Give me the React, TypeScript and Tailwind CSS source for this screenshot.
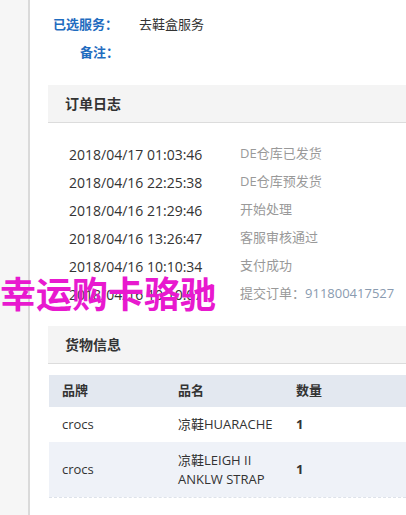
import React from "react";

const font = { fontFamily: '"Open Sans", "Noto Sans CJK SC", sans-serif' };

const logs = [
  ["2018/04/17 01:03:46", "DE仓库已发货"],
  ["2018/04/16 22:25:38", "DE仓库预发货"],
  ["2018/04/16 21:29:46", "开始处理"],
  ["2018/04/16 13:26:47", "客服审核通过"],
  ["2018/04/16 10:10:34", "支付成功"],
];

export default function App() {
  return (
    <div
      className="relative flex w-[406px] h-[515px] overflow-hidden bg-white text-[#333]"
      style={font}
    >
      <div className="w-[30px] shrink-0 bg-[#f6f6f6] border-r-2 border-[#dadada]" />
      <div className="flex-1 flex flex-col pl-[18px]">
        <div className="flex flex-col pt-[15px] gap-[8px] text-[13px]">
          <div className="flex items-center h-[20px]">
            <span className="w-[91px] pl-[5px] font-bold text-[#1f6cc0]">已选服务：</span>
            <span className="text-[#333]">去鞋盒服务</span>
          </div>
          <div className="flex items-center h-[20px]">
            <span className="w-[91px] pl-[5px] font-bold text-[#1f6cc0]">
              <span className="inline-block w-[66px] text-right">备注：</span>
            </span>
          </div>
        </div>

        <div className="mt-[22px] h-[38px] flex items-center pl-[17px] bg-[#f4f4f4] border-b border-[#dcdcdc] text-[14px] font-bold text-[#333]">
          订单日志
        </div>

        <div className="flex flex-col pt-[17px] pl-[21px] text-[14px]">
          {logs.map(([d, s]) => (
            <div key={d} className="flex items-center h-[28px]">
              <span className="w-[171px] text-[#333]">{d}</span>
              <span className="text-[13px] text-[#999]">{s}</span>
            </div>
          ))}
          <div className="flex items-center h-[28px]">
            <span className="w-[171px] text-[#333]">2018/04/16 10:10:07</span>
            <span className="text-[13px] text-[#999]">
              提交订单：<span className="text-[#8a9bb0]">911800417527</span>
            </span>
          </div>
        </div>

        <div className="mt-[18px] h-[38px] flex items-center pl-[17px] bg-[#f4f4f4] border-b border-[#dcdcdc] text-[14px] font-bold text-[#333]">
          货物信息
        </div>

        <div className="mt-[11px] ml-px flex flex-col text-[13px] border-b border-dashed border-[#dde2ea]">
          <div className="flex items-center h-[32px] bg-[#e3e8f0] font-bold text-[#333]">
            <span className="w-[129px] pl-[13px]">品牌</span>
            <span className="w-[118px]">品名</span>
            <span>数量</span>
          </div>
          <div className="flex items-center h-[35px] bg-white">
            <span className="w-[129px] pl-[13px]">crocs</span>
            <span className="w-[118px]">凉鞋HUARACHE</span>
            <span className="font-bold">1</span>
          </div>
          <div className="flex items-center h-[55px] bg-[#eff2f8]">
            <span className="w-[129px] pl-[13px]">crocs</span>
            <span className="w-[118px] leading-[19px]">
              凉鞋LEIGH II
              <br />
              ANKLW STRAP
            </span>
            <span className="font-bold">1</span>
          </div>
        </div>
      </div>

      <div
        className="absolute left-0 top-[272px] text-[36px] font-bold leading-[40px] text-[#e819cf] whitespace-nowrap"
        style={{ fontFamily: '"Noto Sans CJK SC", sans-serif' }}
      >
        幸运购卡骆驰
      </div>
    </div>
  );
}
